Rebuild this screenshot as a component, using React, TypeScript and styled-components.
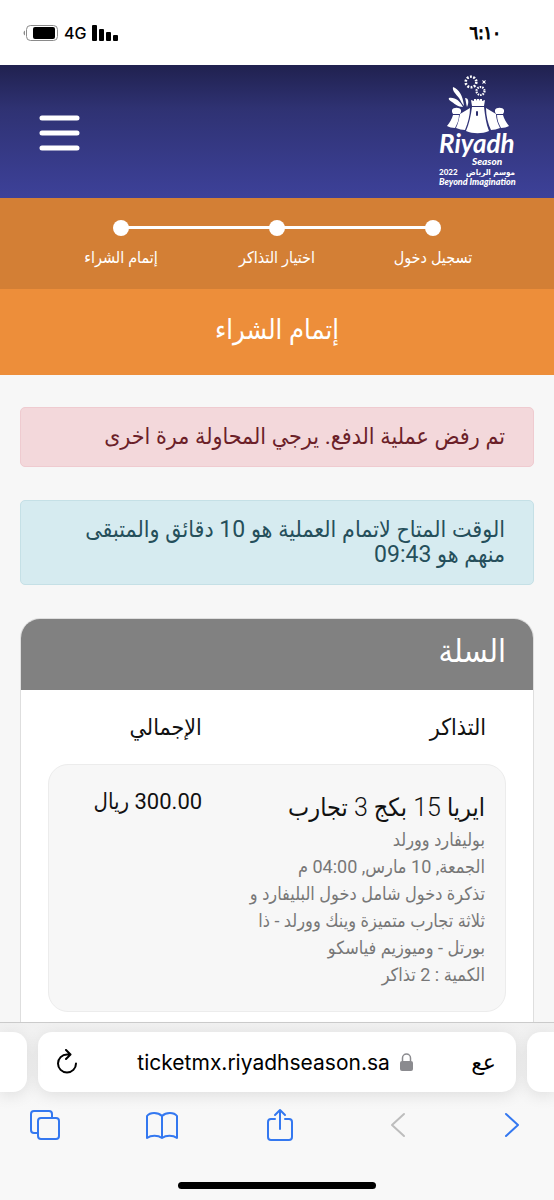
import React from 'react';
import styled, { createGlobalStyle } from 'styled-components';

const GlobalStyle = createGlobalStyle`
  *, *::before, *::after { box-sizing: border-box; }
  body { margin: 0; background: #f7f7f7; font-family: Roboto, "DejaVu Sans Condensed", "DejaVu Sans", sans-serif; }
  h1, h2, h3, p, ol { margin: 0; padding: 0; font-weight: 400; }
  button { border: 0; background: none; padding: 0; display: flex; cursor: pointer; }
`;

const Screen = styled.div`
  height: 100vh;
  display: flex;
  flex-direction: column;
  overflow: hidden;
`;

const StatusBar = styled.div`
  flex: none;
  height: 65px;
  padding: 0 53px 0 22px;
  background: #fff;
  color: #000;
  display: flex;
  align-items: center;
  justify-content: space-between;
`;

const Clock = styled.time`
  font-family: "DejaVu Sans Condensed", "DejaVu Sans", sans-serif;
  font-size: 18px;
  -webkit-text-stroke: 1px #000;
  direction: ltr;
`;

const StatusIcons = styled.div`
  direction: ltr;
  display: flex;
  align-items: center;
  gap: 6px;
  font-family: Inter, sans-serif;
  font-size: 16px;
  font-weight: 500;
`;

const Header = styled.header`
  flex: none;
  height: 133px;
  padding: 3px 36px 0 38px;
  background: linear-gradient(#20214f, #2f3273 33%, #3d4199);
  display: flex;
  align-items: center;
  justify-content: space-between;
`;

const Steps = styled.ol`
  flex: none;
  height: 91px;
  padding: 22px 43px 0;
  background: #d37f35;
  list-style: none;
  display: flex;
`;

const Step = styled.li`
  flex: 1;
  position: relative;
  display: flex;
  flex-direction: column;
  align-items: center;
  gap: 10px;
  color: #fff;
  font-size: 16px;
  line-height: 24px;

  &::before {
    content: "";
    width: 16px;
    height: 16px;
    border-radius: 50%;
    background: #fff;
  }

  & + &::after {
    content: "";
    position: absolute;
    top: 6px;
    left: 50%;
    width: 100%;
    height: 3px;
    background: #fff;
  }
`;

const Title = styled.h1`
  flex: none;
  height: 86px;
  background: #ed8e3a;
  color: #fff;
  font-size: 27px;
  line-height: 82px;
  text-align: center;
`;

const Main = styled.main`
  flex: 1;
  min-height: 0;
  overflow: hidden;
  padding: 32px 20px 0;
  display: flex;
  flex-direction: column;
  gap: 33px;
`;

const Alert = styled.p<{ $tone: 'danger' | 'info' }>`
  flex: none;
  padding: 16px 28px 17px;
  border: 1px solid ${(p) => (p.$tone === 'danger' ? '#efcbd0' : '#c5e0e6')};
  border-radius: 5px;
  background: ${(p) => (p.$tone === 'danger' ? '#f3d8db' : '#d6ebf0')};
  color: ${(p) => (p.$tone === 'danger' ? '#6b1f29' : '#254f5b')};
  font-size: 23px;
  line-height: 25px;
`;

const Cart = styled.section`
  flex: none;
  border: 1px solid #dedede;
  border-radius: 20px;
  background: #fff;
  overflow: hidden;
`;

const CartTitle = styled.h2`
  height: 71px;
  padding: 0 27px;
  background: #818181;
  color: #fff;
  font-size: 32px;
  line-height: 64px;
`;

const CartBody = styled.div`
  padding: 0 27px 40px;
`;

const Columns = styled.div`
  display: grid;
  grid-template-columns: 17fr 8fr;
  padding: 0 20px;
`;

const ColumnHeads = styled(Columns)`
  height: 74px;
  color: #111;
  font-size: 23px;
  line-height: 76px;
`;

const Item = styled(Columns)`
  padding: 25px 20px 23px;
  border: 1px solid #ececec;
  border-radius: 20px;
  background: #f7f7f7;
`;

const ItemName = styled.h3`
  color: #111;
  font-size: 25px;
  font-weight: 300;
  line-height: 36px;
  white-space: nowrap;
`;

const ItemLine = styled.p`
  color: #777;
  font-size: 18px;
  line-height: 27px;
  white-space: nowrap;
`;

const Price = styled.p`
  color: #111;
  font-size: 22px;
  line-height: 24px;
`;

const BrowserBar = styled.footer`
  flex: none;
  height: 178px;
  border-top: 1px solid #cbcbcb;
  background: linear-gradient(#f1f1f1, #f8f8f8 50%);
  display: flex;
  flex-direction: column;
  align-items: center;
`;

const Tabs = styled.div`
  width: 100%;
  padding-top: 9px;
  display: flex;
  gap: 11px;
`;

const Tab = styled.div`
  height: 60px;
  border-radius: 14px;
  background: #fff;
  box-shadow: 0 3px 16px rgba(0, 0, 0, 0.1);
`;

const NextTab = styled(Tab)`
  flex: 0 0 27px;
  border-radius: 0 14px 14px 0;
  &:first-child { border-radius: 14px 0 0 14px; }
`;

const AddressTab = styled(Tab)`
  flex: 1;
  padding: 0 20px 0 17px;
  color: #000;
  display: flex;
  align-items: center;
  justify-content: space-between;
`;

const Address = styled.span`
  direction: ltr;
  display: flex;
  align-items: center;
  gap: 10px;
  font-family: Inter, sans-serif;
  font-size: 21px;
`;

const PageMenu = styled.button`
  color: #000;
  font: 22px "DejaVu Sans", sans-serif;
`;

const Toolbar = styled.nav`
  width: 100%;
  padding: 15px 26px 0;
  display: flex;
  align-items: center;
  justify-content: space-between;
`;

const HomeIndicator = styled.div`
  width: 198px;
  height: 7px;
  margin-top: auto;
  margin-bottom: 11px;
  border-radius: 4px;
  background: #000;
`;

const LogoArt = styled.svg`
  direction: ltr;
  fill: #fff;
  font-family: Lato, "DejaVu Sans", sans-serif;
  font-weight: 900;
`;

const Logo = () => (
  <LogoArt width="82" height="116" viewBox="0 1 82 116" role="img" aria-label="Riyadh Season">
    <g fill="none" stroke="#fff">
      <circle cx="35" cy="8" r="5.300" strokeWidth="2.600" strokeDasharray="1.900 1.430" />
      <circle cx="44.500" cy="17" r="4" strokeWidth="2.200" strokeDasharray="1.500 1.010" />
    </g>
    <path d="M46 6l2 1 2-1-1 2 1 2-2-1-2 1 1-2z" />
    <path d="M17 13c6 2 10 9 11 19-2-2-3-5-5-8-3-4-7-7-6-11zM13 24c6-1 11 3 14 9-5 0-8-3-11-5-2-1-4-3-3-4zM29 24c4 0 4 5 2 9-1-3-1-6-2-9z" />
    <path d="M35 26l3 1v-2h2v2l1-2h2l1 2v-2h2v2l3-1-1 6H36zM36 33h12c1 8 2 17 5 24-7 3-16 3-23 0 3-7 5-16 6-24z" />
    <path d="M34 34c0 7-2 15-5 22-3 0-6-1-9-2 2-4 3-9 4-14zM50 34c0 8 2 16 5 22 3 0 6-1 9-2-2-4-4-9-4-14z" />
    <path d="M16 36c1-3 8-3 9 0v2l-1 2h-7l-1-2zM17 41h6c0 5-2 9-4 13-3 0-6-1-8-2 3-4 5-7 6-11zM59 36c1-3 8-3 9 0v2l-1 2h-7l-1-2zM61 41h6c1 4 3 7 6 11-2 1-5 2-8 2-2-4-4-8-4-13z" />
    <rect x="40" y="37" width="2" height="5" rx="1" fill="#2c2e6c" />
    <g fontStyle="italic">
      <text x="3" y="79" fontSize="26" fontWeight="700">Riyadh</text>
      <text x="36" y="91" fontSize="10">Season</text>
      <text x="3" y="111" fontSize="9">Beyond Imagination</text>
    </g>
    <text x="3" y="101" fontSize="8">2022</text>
    <text x="79" y="101" direction="rtl" fontSize="8" fontFamily="'DejaVu Sans Condensed', 'DejaVu Sans', sans-serif">موسم الرياض</text>
  </LogoArt>
);

const MenuIcon = () => (
  <svg width="42" height="36" viewBox="0 0 42 36" stroke="#fff" strokeWidth="5" strokeLinecap="round">
    <path d="M4 3h35M4 18h35M4 33h35" />
  </svg>
);

const Battery = () => (
  <svg width="36" height="18" viewBox="0 0 36 18">
    <rect x="4.500" y="1.500" width="31" height="15" rx="4" fill="none" stroke="#8a8a8a" />
    <rect x="11" y="3" width="22" height="12" rx="2" />
    <path d="M3 6.500v5c-2-1-2-4 0-5z" fill="#8a8a8a" />
  </svg>
);

const Signal = () => (
  <svg width="26" height="16" viewBox="0 0 26 16">
    <rect x="0" y="0" width="5" height="16" rx="1" />
    <rect x="7" y="4" width="5" height="12" rx="1" />
    <rect x="14" y="7" width="5" height="9" rx="1" />
    <rect x="21" y="10" width="5" height="6" rx="1" />
  </svg>
);

const Line = styled.svg<{ $muted?: boolean }>`
  fill: none;
  stroke: ${(p) => (p.$muted ? '#bdbdbd' : '#3478f0')};
  stroke-width: 2;
  stroke-linecap: round;
  stroke-linejoin: round;
`;

export default function App() {
  return (
    <>
      <GlobalStyle />
      <Screen dir="rtl" lang="ar">
        <StatusBar>
          <Clock>٦:١٠</Clock>
          <StatusIcons>
            <Battery />
            4G
            <Signal />
          </StatusIcons>
        </StatusBar>
        <Header>
          <Logo />
          <button type="button" aria-label="القائمة"><MenuIcon /></button>
        </Header>
        <Steps>
          <Step>تسجيل دخول</Step>
          <Step>اختيار التذاكر</Step>
          <Step>إتمام الشراء</Step>
        </Steps>
        <Title>إتمام الشراء</Title>
        <Main>
          <Alert $tone="danger">تم رفض عملية الدفع. يرجي المحاولة مرة اخرى</Alert>
          <Alert $tone="info">الوقت المتاح لاتمام العملية هو 10 دقائق والمتبقى منهم هو 09:43</Alert>
          <Cart>
            <CartTitle>السلة</CartTitle>
            <CartBody>
              <ColumnHeads>
                <span>التذاكر</span>
                <span>الإجمالي</span>
              </ColumnHeads>
              <Item>
                <div>
                  <ItemName>ايريا 15 بكج 3 تجارب</ItemName>
                  <ItemLine>بوليفارد وورلد</ItemLine>
                  <ItemLine>الجمعة, 10 مارس, 04:00 م</ItemLine>
                  <ItemLine>تذكرة دخول شامل دخول البليفارد و<br />ثلاثة تجارب متميزة وينك وورلد - ذا<br />بورتل - وميوزيم فياسكو</ItemLine>
                  <ItemLine>الكمية : 2 تذاكر</ItemLine>
                </div>
                <Price>300.00 ريال</Price>
              </Item>
            </CartBody>
          </Cart>
        </Main>
        <BrowserBar>
          <Tabs>
            <NextTab />
            <AddressTab>
              <PageMenu type="button">عع</PageMenu>
              <Address>
                ticketmx.riyadhseason.sa
                <svg width="13" height="18" viewBox="0 0 13 18" fill="#8b8b8f">
                  <path d="M2.500 8V5a4 4 0 0 1 8 0v3" fill="none" stroke="#8b8b8f" strokeWidth="1.500" />
                  <rect y="8" width="13" height="10" rx="2" />
                </svg>
              </Address>
              <button type="button" aria-label="إعادة تحميل">
                <svg width="24" height="26" viewBox="0 0 24 26" fill="none" stroke="#000" strokeWidth="2" strokeLinecap="round" strokeLinejoin="round">
                  <path d="M15 5.500H12a9 9 0 1 0 9 9M11 1l4.500 4.500L11 10" />
                </svg>
              </button>
            </AddressTab>
            <NextTab />
          </Tabs>
          <Toolbar>
            <button type="button" aria-label="التالي">
              <Line width="32" height="36" viewBox="0 0 32 36"><path d="M10 7l12 11-12 11" /></Line>
            </button>
            <button type="button" aria-label="السابق">
              <Line $muted width="32" height="36" viewBox="0 0 32 36"><path d="M24 7L12 18l12 11" /></Line>
            </button>
            <button type="button" aria-label="مشاركة">
              <Line width="32" height="36" viewBox="0 0 32 36"><path d="M11 12H7a3 3 0 0 0-3 3v15a3 3 0 0 0 3 3h18a3 3 0 0 0 3-3V15a3 3 0 0 0-3-3h-4M16 22V3M11 8l5-5 5 5" /></Line>
            </button>
            <button type="button" aria-label="الإشارات">
              <Line width="34" height="36" viewBox="0 0 34 36"><path d="M16 9c-4-4-12-4-15 0v22c4-3 11-3 15 0 4-3 11-3 15 0V9c-3-4-11-4-15 0zM16 9v22" /></Line>
            </button>
            <button type="button" aria-label="علامات التبويب">
              <Line width="36" height="36" viewBox="0 0 36 36"><rect x="12" y="11" width="21" height="21" rx="3" /><path d="M12 26H8a3 3 0 0 1-3-3V7a3 3 0 0 1 3-3h15a3 3 0 0 1 3 3v4" /></Line>
            </button>
          </Toolbar>
          <HomeIndicator />
        </BrowserBar>
      </Screen>
    </>
  );
}
